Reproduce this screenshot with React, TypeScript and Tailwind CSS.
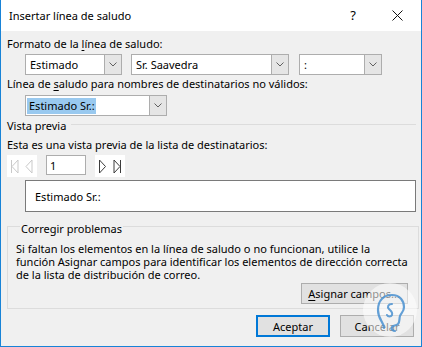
import React from "react"

function Chevron() {
  return (
    <svg width="8" height="5" viewBox="0 0 8 5" className="block">
      <polyline points="0.5,0.5 4,4 7.5,0.5" fill="none" stroke="#606060" strokeWidth="1" />
    </svg>
  )
}

function Combo({
  width,
  value,
  selected = false,
}: {
  width: string
  value: string
  selected?: boolean
}) {
  return (
    <div className={`${width} h-[21px] flex bg-white border border-[#adadad]`}>
      <div className="flex-1 flex items-center pl-[1px] min-w-0">
        {selected ? (
          <span className="bg-[#99c9ef] h-[16px] leading-[16px] pl-[2px] pr-[1px]">{value}</span>
        ) : (
          <span className="pl-[3px] leading-[16px]">{value}</span>
        )}
      </div>
      <div className="w-[17px] flex items-center justify-center bg-[#e5e5e5] border-l border-[#adadad]">
        <Chevron />
      </div>
    </div>
  )
}

function NavIcon({ kind, disabled }: { kind: "first" | "prev" | "next" | "last"; disabled?: boolean }) {
  const c = disabled ? "#c9c9c9" : "#3c3c3c"
  return (
    <svg width="9" height="15" viewBox="0 0 9 15" className="block">
      {kind === "first" && (
        <>
          <line x1="1.5" y1="1" x2="1.5" y2="14" stroke={c} />
          <polyline points="8,1 2,7.5 8,14 8,1" fill="none" stroke={c} />
        </>
      )}
      {kind === "prev" && <polyline points="7,1 1,7.5 7,14 7,1" fill="none" stroke={c} />}
      {kind === "next" && <polyline points="1.5,1 7.5,7.5 1.5,14 1.5,1" fill="none" stroke={c} />}
      {kind === "last" && (
        <>
          <polyline points="1,1 7,7.5 1,14 1,1" fill="none" stroke={c} />
          <line x1="7.5" y1="1" x2="7.5" y2="14" stroke={c} />
        </>
      )}
    </svg>
  )
}

function Watermark() {
  return (
    <svg
      width="56"
      height="56"
      viewBox="0 0 56 56"
      className="absolute left-[361px] top-[282px] pointer-events-none"
    >
      <circle cx="28" cy="28" r="27" fill="#ffffff" fillOpacity="0.55" />
      <path
        d="M22 46 C22 40 16 38 16 28 C16 18 22 13 30 13 C38 13 42 19 42 25 C42 30 39 31 38 34 C37 37 38 40 36 42 C34 44 31 43 30 45 C29 47 31 49 33 49"
        fill="none"
        stroke="#4a90d0"
        strokeWidth="2.2"
        strokeLinecap="round"
        strokeOpacity="0.85"
      />
      <path
        d="M30 22 C26 22 25 25 27 27 C29 29 31 30 30 33 C29 35 26 35 25 33"
        fill="none"
        stroke="#4a90d0"
        strokeWidth="2"
        strokeLinecap="round"
        strokeOpacity="0.85"
      />
    </svg>
  )
}

export default function App() {
  return (
    <div className="relative w-[422px] h-[347px] flex flex-col overflow-hidden bg-[#f0f0f0] border-x border-b border-[#1883d7] font-['Noto_Sans',sans-serif] text-[11px] text-black">
      {/* title bar */}
      <div className="h-[31px] shrink-0 bg-white flex items-center pl-[8px]">
        <span className="leading-[15px]">Insertar línea de saludo</span>
        <span className="ml-auto text-[13px] leading-[15px] mr-[36px]">?</span>
        <svg width="11" height="11" viewBox="0 0 11 11" className="mr-[18px]">
          <line x1="0.5" y1="0.5" x2="10.5" y2="10.5" stroke="#111" strokeWidth="1" />
          <line x1="10.5" y1="0.5" x2="0.5" y2="10.5" stroke="#111" strokeWidth="1" />
        </svg>
      </div>

      <div className="flex-1 flex flex-col pl-[6px] pr-[5px] pt-[5px]">
        <div className="leading-[15px]">
          Formato de la <span className="underline underline-offset-2">l</span>ínea de saludo:
        </div>
        <div className="mt-[3px] ml-[18px] flex">
          <Combo width="w-[97px]" value="Estimado" />
          <div className="w-[9px]" />
          <Combo width="w-[158px]" value="Sr. Saavedra" />
          <div className="w-[10px]" />
          <Combo width="w-[83px]" value=":" />
        </div>

        <div className="mt-[1px] leading-[15px]">
          Línea de <span className="underline underline-offset-2">s</span>aludo para nombres de destinatarios no válidos:
        </div>
        <div className="mt-[4px] ml-[18px] flex">
          <Combo width="w-[142px]" value="Estimado Sr.:" selected />
        </div>

        <div className="mt-[2px] flex items-center">
          <span className="leading-[15px]">Vista previa</span>
          <div className="flex-1 h-px bg-[#dcdcdc] ml-[5px] mt-[-2px]" />
        </div>
        <div className="mt-[4px] leading-[15px]">Esta es una vista previa de la lista de destinatarios:</div>

        <div className="mt-[3px] flex items-start">
          <div className="w-[30px] h-[22px] bg-white flex items-center justify-between px-[3px]">
            <NavIcon kind="first" disabled />
            <NavIcon kind="prev" disabled />
          </div>
          <div className="ml-[9px] w-[40px] h-[20px] bg-white border border-[#adadad] flex items-center pl-[3px] leading-[15px]">
            1
          </div>
          <div className="ml-[9px] w-[30px] h-[22px] bg-white flex items-center justify-between px-[3px]">
            <NavIcon kind="next" />
            <NavIcon kind="last" />
          </div>
        </div>

        <div className="mt-[3px] ml-[18px] h-[32px] bg-white border border-[#7a7a7a] flex items-center pl-[9px] leading-[15px]">
          Estimado Sr.:
        </div>

        <fieldset className="mt-[5px] border border-[#dcdcdc] pl-[8px] pr-[10px] pb-[4px]">
          <legend className="ml-[4px] px-[1px] pt-[4px] leading-[15px]">Corregir problemas</legend>
          <p className="mt-[6px] leading-[13px] whitespace-nowrap">
            Si faltan los elementos en la línea de saludo o no funcionan, utilice la
            <br />
            función Asignar campos para identificar los elementos de dirección correcta
            <br />
            de la lista de distribución de correo.
          </p>
          <div className="mt-[2px] flex justify-end">
            <div className="w-[107px] h-[21px] bg-[#e1e1e1] border border-[#adadad] flex items-center justify-center leading-[15px]">
              <span>
                <span className="underline underline-offset-2">A</span>signar campos...
              </span>
            </div>
          </div>
        </fieldset>

        <div className="mt-[6px] flex justify-end pr-[2px]">
          <div className="w-[74px] h-[22px] bg-[#e1e1e1] border-2 border-[#0078d7] flex items-center justify-center leading-[15px]">
            Aceptar
          </div>
          <div className="ml-[10px] w-[74px] h-[22px] bg-[#e1e1e1] border border-[#adadad] flex items-center justify-center leading-[15px]">
            Cancelar
          </div>
        </div>
      </div>

      <Watermark />
    </div>
  )
}
